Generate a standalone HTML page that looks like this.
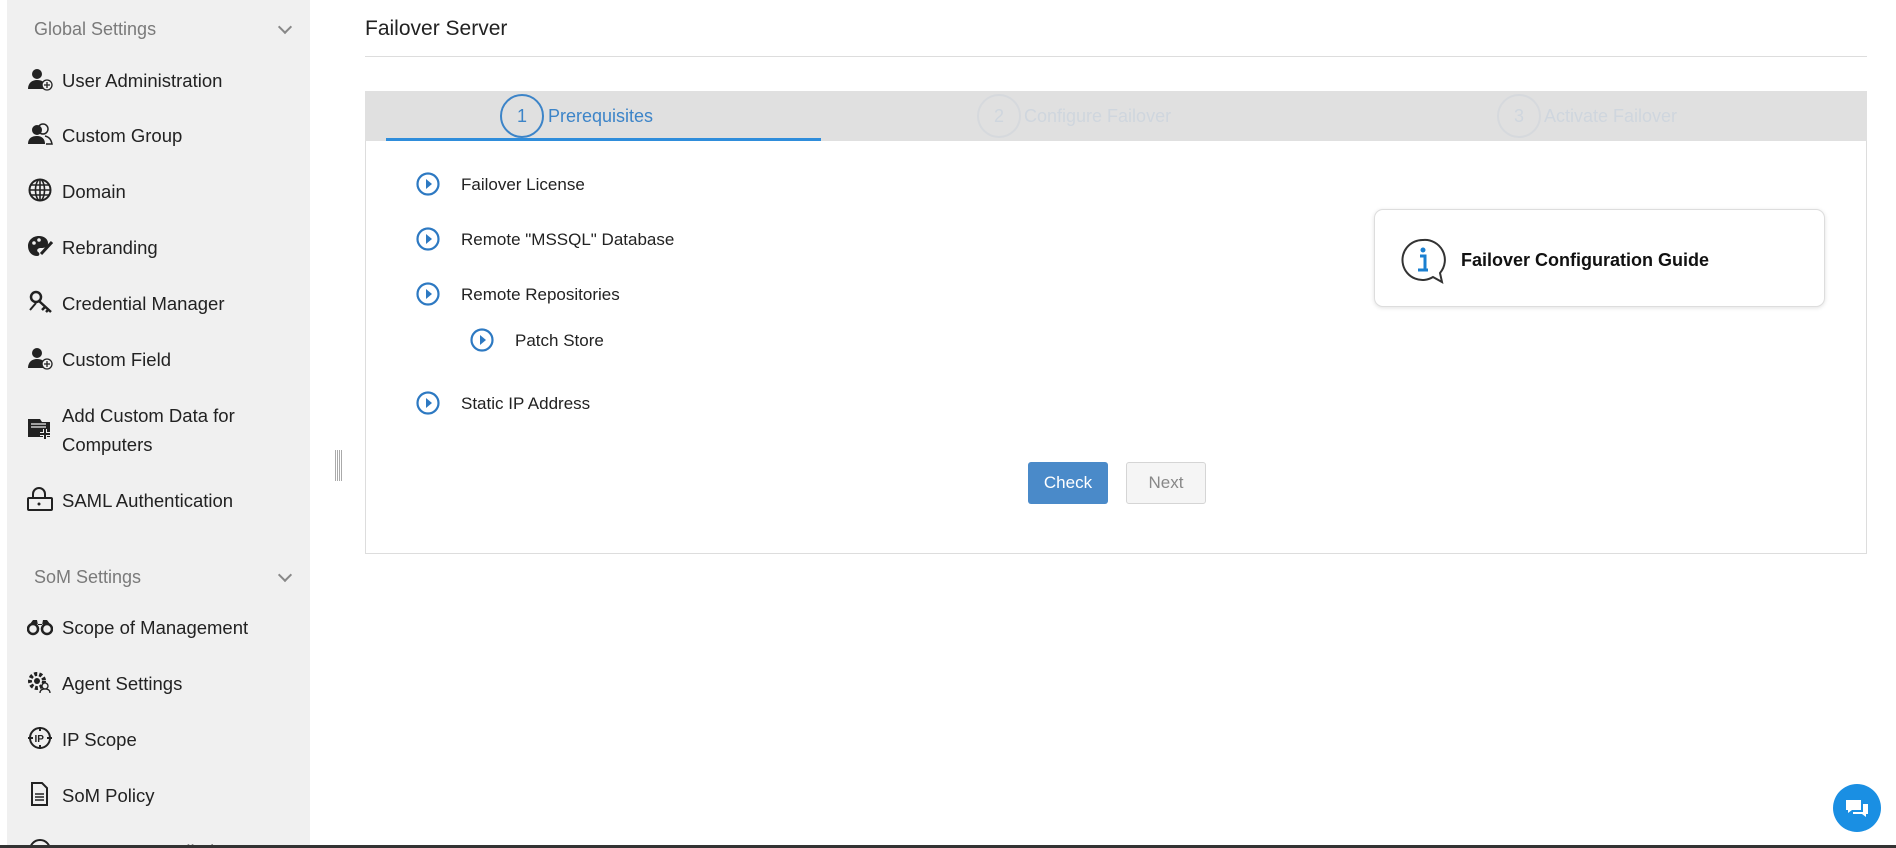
<!DOCTYPE html>
<html><head><meta charset="utf-8"><style>
*{margin:0;padding:0;box-sizing:border-box}
html,body{width:1896px;height:848px;overflow:hidden}
body{background:#fff;font-family:"Liberation Sans",sans-serif;position:relative;color:#222}
.sb{position:absolute;left:7px;top:0;width:303px;height:845px;background:#f0f0f0;overflow:hidden}
.sb .in{position:absolute;left:-7px;top:0;width:310px;height:845px;overflow:hidden}
.hd{position:absolute;left:34px;font-size:18px;color:#7a7a7a}
.chev{position:absolute;left:280px;width:10px;height:10px;border-right:2px solid #888;border-bottom:2px solid #888;transform:rotate(45deg)}
.it{position:absolute;left:62px;font-size:18.5px;color:#222;line-height:29px;white-space:nowrap}
.ic{position:absolute;left:27px;width:26px;height:24px}
.t{position:absolute;white-space:nowrap}
.li{position:absolute;font-size:17px;color:#222}
.pl{position:absolute;width:24px;height:24px}
</style></head><body>
<div class="sb"><div class="in">
<div class="hd" style="top:19px">Global Settings</div><div class="chev" style="top:22px"></div>
<div class="hd" style="top:567px">SoM Settings</div><div class="chev" style="top:570px"></div>

<svg class="ic" style="top:67px" viewBox="0 0 26 24"><circle cx="10" cy="7" r="5" fill="#222"/><path d="M1 22c0-6 4-9 9-9s7 2 8 4v5z" fill="#222"/><circle cx="20" cy="18" r="5" fill="#f0f0f0" stroke="#222" stroke-width="1.3"/><path d="M20 15v6M17 18h6" stroke="#222" stroke-width="1.3"/></svg>
<div class="it" style="top:66px">User Administration</div>
<svg class="ic" style="top:122px" viewBox="0 0 26 24"><circle cx="16" cy="7" r="5" fill="none" stroke="#222" stroke-width="1.5"/><circle cx="10" cy="8" r="5" fill="#222"/><path d="M1 22c0-6 4-8 9-8s8 3 8 8z" fill="#222"/><path d="M18 14c4 1 6 3 7 8h-6" fill="none" stroke="#222" stroke-width="1.5"/></svg>
<div class="it" style="top:121px">Custom Group</div>
<svg class="ic" style="top:178px" viewBox="0 0 26 24"><circle cx="13" cy="12" r="10.5" fill="none" stroke="#222" stroke-width="2"/><ellipse cx="13" cy="12" rx="4.5" ry="10.5" fill="none" stroke="#222" stroke-width="1.6"/><path d="M2.5 12h21M4 7h18M4 17h18M13 1.5v21" stroke="#222" stroke-width="1.6"/></svg>
<div class="it" style="top:177px">Domain</div>
<svg class="ic" style="top:234px" viewBox="0 0 26 24"><path d="M12 2C5 2 1 7 1 12c0 6 4 10 9 10 3 0 3-3 1-4-2-2 0-4 3-4 4 0 7-1 7-5 0-4-4-7-9-7z" fill="#222"/><circle cx="7" cy="9" r="1.8" fill="#f0f0f0"/><circle cx="12" cy="6" r="1.8" fill="#f0f0f0"/><path d="M14 20l11-12" stroke="#222" stroke-width="3"/></svg>
<div class="it" style="top:233px">Rebranding</div>
<svg class="ic" style="top:290px" viewBox="0 0 26 24"><circle cx="9" cy="7" r="5" fill="none" stroke="#222" stroke-width="2.5"/><path d="M12 11l12 11M18 17l-3 3M21 20l-2 2" stroke="#222" stroke-width="2.5"/><path d="M3 20l6-7" stroke="#222" stroke-width="2"/></svg>
<div class="it" style="top:289px">Credential Manager</div>
<svg class="ic" style="top:346px" viewBox="0 0 26 24"><circle cx="10" cy="7" r="5" fill="#222"/><path d="M1 22c0-6 4-9 9-9s7 2 8 4v5z" fill="#222"/><circle cx="20" cy="18" r="5" fill="#f0f0f0" stroke="#222" stroke-width="1.3"/><path d="M20 15v6M17 18h6" stroke="#222" stroke-width="1.3"/></svg>
<div class="it" style="top:345px">Custom Field</div>
<svg class="ic" style="top:416px" viewBox="0 0 26 24"><path d="M1 3h12l2 3h8v15H1z" fill="#222"/><path d="M4 8h15M4 11h15" stroke="#f0f0f0" stroke-width="1.3"/><path d="M18 13v10M13 18h10" stroke="#f0f0f0" stroke-width="4"/><path d="M18 13v10M13 18h10" stroke="#222" stroke-width="2"/></svg>
<div class="it" style="top:401px">Add Custom Data for<br>Computers</div>
<svg class="ic" style="top:487px" viewBox="0 0 26 24"><path d="M6 11V7a6 6 0 0 1 12 0v4" fill="none" stroke="#222" stroke-width="2"/><rect x="1" y="11" width="24" height="12" rx="1" fill="none" stroke="#222" stroke-width="2"/><circle cx="12" cy="17" r="1.5" fill="#222"/></svg>
<div class="it" style="top:486px">SAML Authentication</div>

<svg class="ic" style="top:614px" viewBox="0 0 26 24"><circle cx="6" cy="15" r="5" fill="none" stroke="#222" stroke-width="2.5"/><circle cx="20" cy="15" r="5" fill="none" stroke="#222" stroke-width="2.5"/><path d="M3 10l3-4h4l1 5h4l1-5h4l3 4" fill="#222"/></svg>
<div class="it" style="top:613px">Scope of Management</div>
<svg class="ic" style="top:670px" viewBox="0 0 26 24"><circle cx="10" cy="11" r="7" fill="none" stroke="#222" stroke-width="4" stroke-dasharray="3 2"/><circle cx="10" cy="11" r="3" fill="#222"/><circle cx="18" cy="16" r="3" fill="#f0f0f0" stroke="#222" stroke-width="1.3"/><path d="M13 23c0-3 2-4 5-4s5 1 5 4" fill="none" stroke="#222" stroke-width="1.3"/></svg>
<div class="it" style="top:669px">Agent Settings</div>
<svg class="ic" style="top:726px" viewBox="0 0 26 24"><circle cx="13" cy="12" r="10" fill="none" stroke="#222" stroke-width="2"/><path d="M1 12h5M20 12h5M13 1v4M13 19v4" stroke="#222" stroke-width="2"/><text x="7.5" y="16" font-size="10" font-weight="bold" font-family="Liberation Sans" fill="#222">IP</text></svg>
<div class="it" style="top:725px">IP Scope</div>
<svg class="ic" style="top:782px" viewBox="0 0 26 24"><path d="M5 1h10l5 5v17H5z" fill="none" stroke="#222" stroke-width="2"/><path d="M8 12h9M8 15h9M8 18h9" stroke="#222" stroke-width="1.5"/></svg>
<div class="it" style="top:781px">SoM Policy</div>
<div style="position:absolute;left:0;top:836px;width:310px;height:9px;overflow:hidden">
<svg style="position:absolute;left:27px;top:2px" width="26" height="24" viewBox="0 0 26 24"><circle cx="13" cy="12" r="10" fill="none" stroke="#222" stroke-width="2"/></svg>
<div style="position:absolute;left:62px;top:1px;font-size:18.5px;line-height:29px;white-space:nowrap">Bootstrap Installation</div>
</div>
</div></div>

<div style="position:absolute;left:335px;top:450px;width:7px;height:31px;background:repeating-linear-gradient(90deg,#aaa 0 1px,#fff 1px 2px)"></div>
<div style="position:absolute;left:0;top:845px;width:1896px;height:3px;background:#333"></div>

<div class="t" style="left:365px;top:17px;font-size:21px;color:#222">Failover Server</div>
<div style="position:absolute;left:365px;top:56px;width:1502px;height:1px;background:#ddd"></div>

<div style="position:absolute;left:365px;top:91px;width:1502px;height:50px;background:#e0e0e0"></div>
<div style="position:absolute;left:386px;top:138px;width:435px;height:3px;background:#2f8ddb"></div>
<div style="position:absolute;left:500px;top:94px;width:44px;height:44px;border:2px solid #3c84c8;border-radius:50%;color:#3c84c8;font-size:18px;text-align:center;line-height:40px">1</div>
<div class="t" style="left:548px;top:106px;font-size:18px;color:#3c84c8">Prerequisites</div>
<div style="position:absolute;left:977px;top:94px;width:44px;height:44px;border:2px solid #d6d9dd;border-radius:50%;color:#cfd6de;font-size:18px;text-align:center;line-height:40px">2</div>
<div class="t" style="left:1024px;top:106px;font-size:18px;color:#cfd6de">Configure Failover</div>
<div style="position:absolute;left:1497px;top:94px;width:44px;height:44px;border:2px solid #d6d9dd;border-radius:50%;color:#cfd6de;font-size:18px;text-align:center;line-height:40px">3</div>
<div class="t" style="left:1544px;top:106px;font-size:18px;color:#cfd6de">Activate Failover</div>

<div style="position:absolute;left:365px;top:141px;width:1502px;height:413px;border:1px solid #ddd;border-top:none"></div>

<svg class="pl" style="left:416px;top:172px" viewBox="0 0 24 24"><circle cx="12" cy="12" r="10.5" fill="none" stroke="#2d79c2" stroke-width="2.2"/><path d="M10 7l6 5-6 5z" fill="#2d79c2"/></svg>
<div class="li" style="left:461px;top:175px">Failover License</div>
<svg class="pl" style="left:416px;top:227px" viewBox="0 0 24 24"><circle cx="12" cy="12" r="10.5" fill="none" stroke="#2d79c2" stroke-width="2.2"/><path d="M10 7l6 5-6 5z" fill="#2d79c2"/></svg>
<div class="li" style="left:461px;top:230px">Remote "MSSQL" Database</div>
<svg class="pl" style="left:416px;top:282px" viewBox="0 0 24 24"><circle cx="12" cy="12" r="10.5" fill="none" stroke="#2d79c2" stroke-width="2.2"/><path d="M10 7l6 5-6 5z" fill="#2d79c2"/></svg>
<div class="li" style="left:461px;top:285px">Remote Repositories</div>
<svg class="pl" style="left:470px;top:328px" viewBox="0 0 24 24"><circle cx="12" cy="12" r="10.5" fill="none" stroke="#2d79c2" stroke-width="2.2"/><path d="M10 7l6 5-6 5z" fill="#2d79c2"/></svg>
<div class="li" style="left:515px;top:331px">Patch Store</div>
<svg class="pl" style="left:416px;top:391px" viewBox="0 0 24 24"><circle cx="12" cy="12" r="10.5" fill="none" stroke="#2d79c2" stroke-width="2.2"/><path d="M10 7l6 5-6 5z" fill="#2d79c2"/></svg>
<div class="li" style="left:461px;top:394px">Static IP Address</div>

<div style="position:absolute;left:1374px;top:209px;width:451px;height:98px;border:1px solid #ddd;border-radius:9px;box-shadow:0 1px 4px rgba(0,0,0,.12);background:#fff"></div>
<svg style="position:absolute;left:1400px;top:237px" width="46" height="48" viewBox="0 0 46 48"><path d="M23 3a20 20 0 1 0 10 37l9 5-2-9A20 20 0 0 0 23 3z" fill="none" stroke="#333" stroke-width="2"/><circle cx="23" cy="13" r="2.5" fill="#1a7fd0"/><path d="M20 19h5v14h3M18 33h10" stroke="#1a7fd0" stroke-width="3" fill="none"/></svg>
<div class="t" style="left:1461px;top:250px;font-size:18px;font-weight:bold;color:#111">Failover Configuration Guide</div>

<div style="position:absolute;left:1028px;top:462px;width:80px;height:42px;background:#4a8ac9;border-radius:3px;color:#fff;font-size:17px;text-align:center;line-height:42px">Check</div>
<div style="position:absolute;left:1126px;top:462px;width:80px;height:42px;background:#f5f5f5;border:1px solid #d5d5d5;border-radius:3px;color:#888;font-size:17px;text-align:center;line-height:40px">Next</div>

<svg style="position:absolute;left:1833px;top:784px" width="48" height="48" viewBox="0 0 48 48"><circle cx="24" cy="24" r="24" fill="#1a8fe3"/><path d="M13 16h15v10H19l-4 3v-3h-2z" fill="#fff"/><path d="M30 20h5v10h-2v3l-4-3h-9v-2h10z" fill="#fff"/></svg>
</body></html>
